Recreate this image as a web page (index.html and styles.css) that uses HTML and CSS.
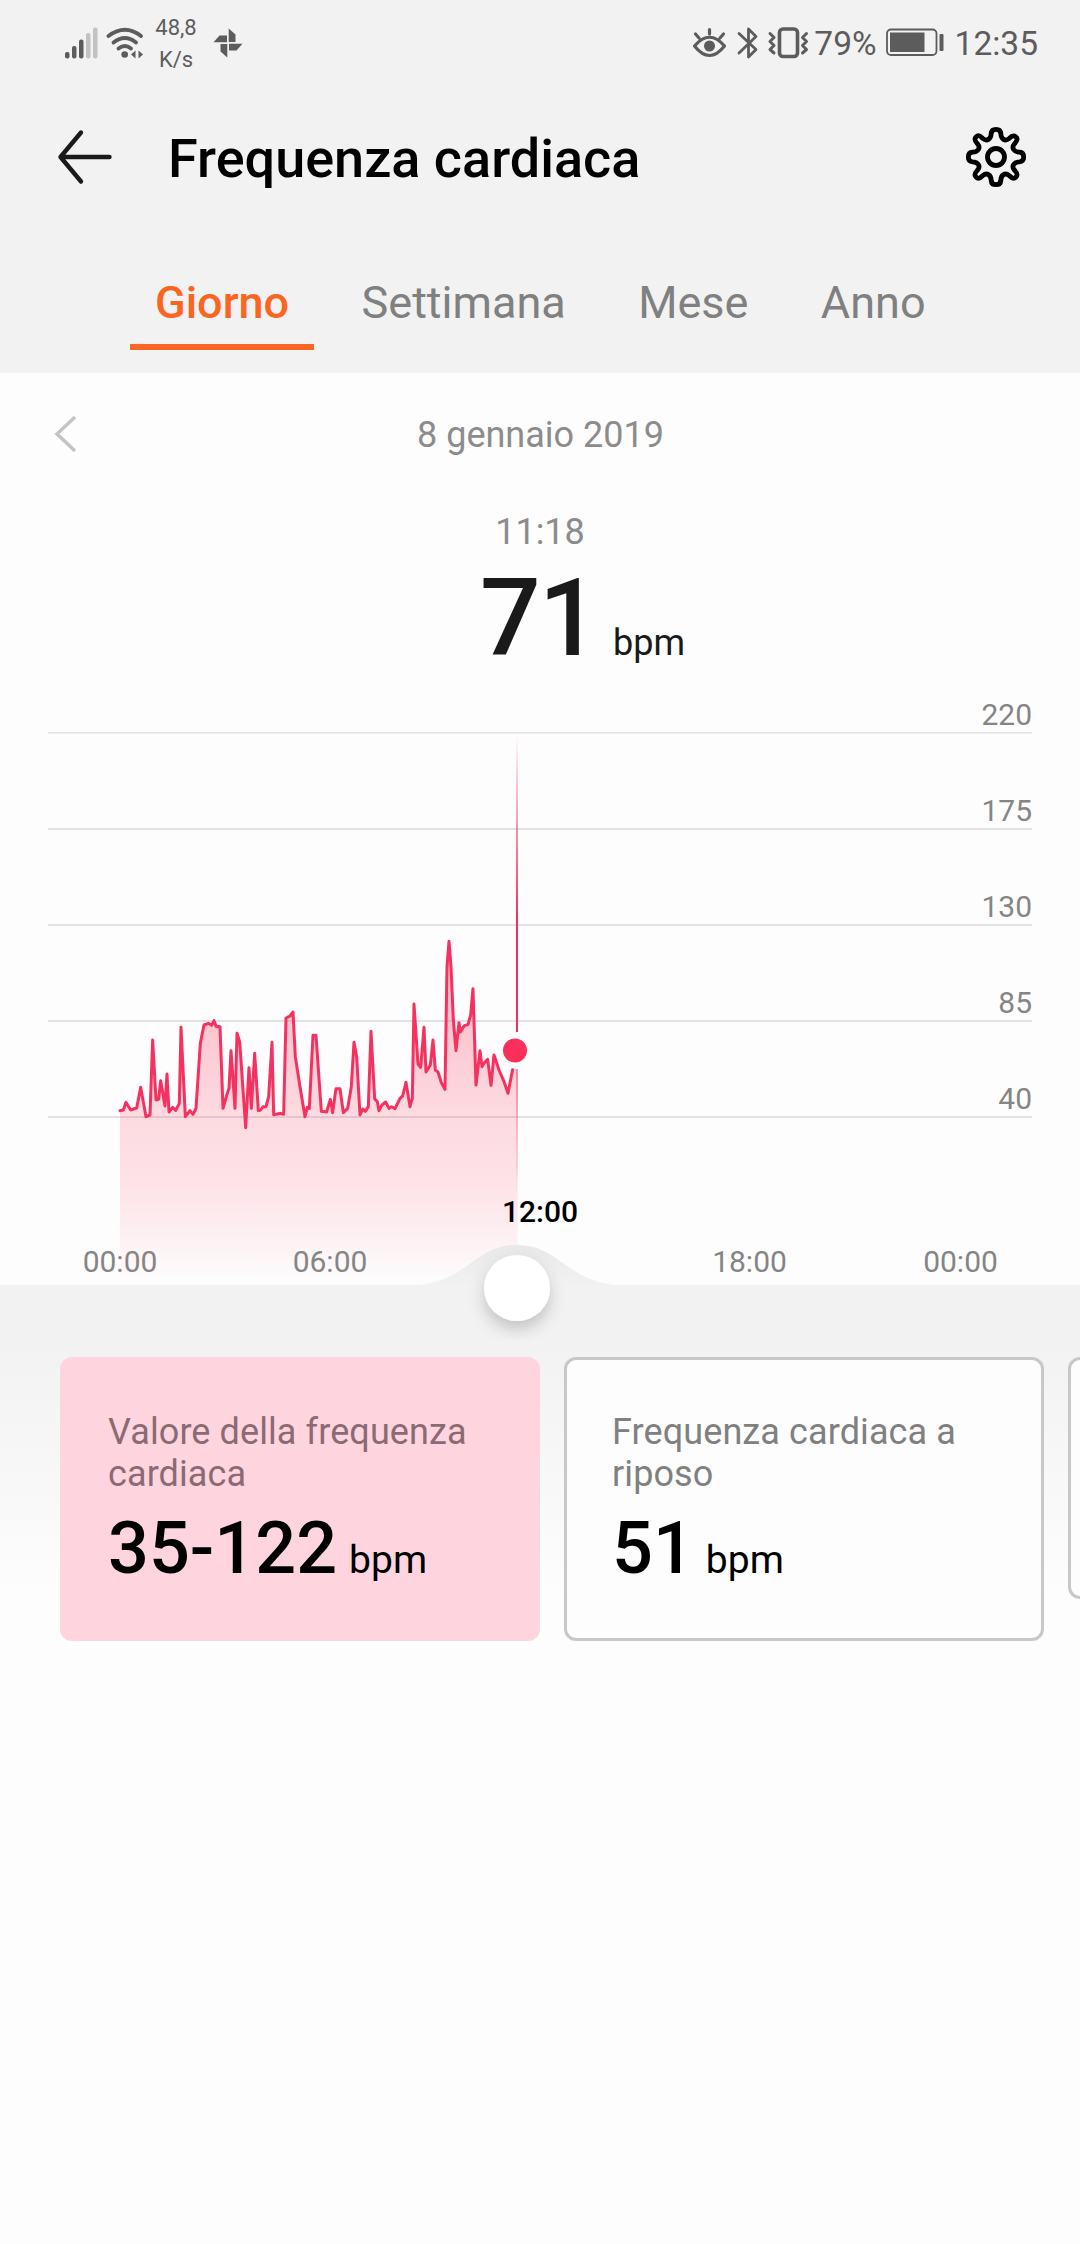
FILE: index.html
```html
<!DOCTYPE html>
<html lang="it">
<head>
    <meta charset="UTF-8">
    <meta name="viewport" content="width=device-width, initial-scale=1.0">
    <title>Frequenza cardiaca</title>
    <link rel="stylesheet" href="styles.css">
</head>
<body>
    <div class="top">
        <div class="status-bar">
            <svg width="94" height="40" viewBox="60 22 94 40">
                <g fill="#5c5c5c">
                    <rect x="65" y="51" width="4.5" height="6.5" rx="2"/>
                    <rect x="72" y="45" width="4.5" height="12.5" rx="2"/>
                    <rect x="79" y="38.5" width="4.5" height="19" rx="2"/>
                </g>
                <g fill="#c2c2c2">
                    <rect x="86" y="32" width="4.5" height="25.5" rx="2"/>
                    <rect x="93" y="26.5" width="4.5" height="31" rx="2"/>
                </g>
                <g fill="none" stroke="#5c5c5c" stroke-width="3.8" stroke-linecap="round">
                    <path d="M108.500 35Q125 22.500 141 35"/>
                    <path d="M113.500 41.500Q125 32.500 136 41.500"/>
                    <path d="M118.500 47.500Q125 42.500 131 47.500"/>
                </g>
                <circle cx="124.7" cy="53.5" r="3.3" fill="#5c5c5c"/>
                <path d="M131 53.500l4.500-4v8zM143 53.500l-4.500-4v8z" fill="#5c5c5c"/>
            </svg>
            <div class="speed"><span>48,8</span><span>K/s</span></div>
            <svg class="pinwheel" width="30" height="30" viewBox="-15 -15 30 30" fill="#5c5c5c">
                <path d="M.7-14.500V-1H7.500V-8.500ZM14.500 .7H1V7.500H8.500ZM-.7 14.500V1H-7.500V8.500ZM-14.500-.7H-1V-7.500H-8.500Z"/>
            </svg>
            <div class="spacer"></div>
            <svg width="120" height="36" viewBox="690 24 120 36" fill="none" stroke="#5c5c5c" stroke-width="3.2" stroke-linecap="round" stroke-linejoin="round">
                <path d="M694.500 45Q709.500 27.500 724.500 45Q709.500 64 694.500 45ZM709.500 28.500V33M695.500 33l3.500 4M723.500 33l-3.500 4"/>
                <circle cx="709.5" cy="45" r="5.5" fill="#5c5c5c" stroke="none"/>
                <path d="M739 32.500L756 48.500L748.500 56V28L756 35.500L739 52" stroke-width="2.800"/>
                <rect x="779.5" y="28" width="18" height="27.5" rx="3.5" stroke-width="3.6"/>
                <path d="M770 32.500l4 4-4 4 4 4-4 4 4 3.500M806.500 32.500l-4 4 4 4-4 4 4 4-4 3.500" stroke-width="3"/>
            </svg>
            <span class="status-text percent">79%</span>
            <svg class="battery" width="60" height="30" viewBox="885 28 60 30">
                <rect x="887" y="29.5" width="49.5" height="25.5" rx="4" fill="none" stroke="#5c5c5c" stroke-width="1.8"/>
                <rect x="890" y="32.5" width="34.5" height="19.5" fill="#5c5c5c"/>
                <rect x="939.5" y="34" width="4" height="17" rx="1" fill="#5c5c5c"/>
            </svg>
            <span class="status-text">12:35</span>
        </div>
        <header>
            <svg width="60" height="60" viewBox="0 0 60 60" fill="none" stroke="#1a1a1a" stroke-width="4.4" stroke-linecap="round" stroke-linejoin="round">
                <path d="M27 5.500L6.500 30L27 54.500M6.500 30H55.500"/>
            </svg>
            <h1>Frequenza cardiaca</h1>
            <svg width="64" height="64" viewBox="-32 -32 64 64" fill="none" stroke="#000" stroke-width="4.8" stroke-linejoin="round">
                <circle r="8.500"/>
                <path d="M-4.800-23.500C-4.600-26.500-3-27.700 0-27.700S4.600-26.500 4.800-23.500C5-18 9-15 13.200-18.500C17-22.500 18.500-21 20-20S22-17 18.500-13.200C15-9 18-5 23.500-4.800C26.500-4.600 27.700-3 27.700 0S26.500 4.600 23.500 4.800C18 5 15 9 18.500 13.200C22 17 21.500 18.500 20 20S17 22.500 13.200 18.500C9 15 5 18 4.800 23.500C4.600 26.500 3 27.700 0 27.700S-4.600 26.500-4.800 23.500C-5 18-9 15-13.200 18.500C-17 22.500-18.500 21.500-20 20S-22 17-18.500 13.200C-15 9-18 5-23.500 4.800C-26.500 4.600-27.700 3-27.700 0S-26.500-4.600-23.500-4.800C-18-5-15-9-18.500-13.200C-22-17-21.500-18.500-20-20S-17-22.500-13.200-18.500C-9-15-5-18-4.800-23.500Z"/>
            </svg>
        </header>
        <nav>
            <a class="tab active">Giorno</a>
            <a class="tab">Settimana</a>
            <a class="tab">Mese</a>
            <a class="tab">Anno</a>
        </nav>
    </div>

    <div class="date-row">
        <svg width="30" height="44" viewBox="0 0 30 44" fill="none" stroke="#c4c4c4" stroke-width="3.5">
            <path d="M23 5L5 22L23 39"/>
        </svg>
        <span class="date">8 gennaio 2019</span>
    </div>

    <div class="reading">
        <div class="time">11:18</div>
        <div class="value"><span class="number">71</span><span class="unit">bpm</span></div>
    </div>

    <svg width="1080" height="650" viewBox="0 690 1080 650">
        <defs>
            <linearGradient id="area" gradientUnits="userSpaceOnUse" x1="0" y1="120" x2="0" y2="1155">
                <stop offset="0" stop-color="#ff2d55" stop-opacity=".36"/>
                <stop offset=".5" stop-color="#ff2d55" stop-opacity=".17"/>
                <stop offset=".7" stop-color="#ff2d55" stop-opacity=".13"/>
                <stop offset="1" stop-color="#ff2d55" stop-opacity="0"/>
            </linearGradient>
            <linearGradient id="cursor" gradientUnits="userSpaceOnUse" x1="0" y1="735" x2="0" y2="920">
                <stop offset="0" stop-color="#ee2f62" stop-opacity="0"/>
                <stop offset="1" stop-color="#ee2f62"/>
            </linearGradient>
            <linearGradient id="cursorLow" gradientUnits="userSpaceOnUse" x1="0" y1="1069" x2="0" y2="1190">
                <stop offset="0" stop-color="#f0507a" stop-opacity=".6"/>
                <stop offset="1" stop-color="#f0507a" stop-opacity="0"/>
            </linearGradient>
            <linearGradient id="bump" gradientUnits="userSpaceOnUse" x1="0" y1="1244" x2="0" y2="1286">
                <stop offset="0" stop-color="#e8e8e8"/>
                <stop offset="1" stop-color="#f2f2f2"/>
            </linearGradient>
            <filter id="shadow" x="-50%" y="-50%" width="200%" height="200%">
                <feDropShadow dx="0" dy="8" stdDeviation="8" flood-color="#000" flood-opacity=".2"/>
            </filter>
        </defs>

        <g fill="#e2e2e2">
            <rect x="48" y="732" width="984" height="1.5"/>
            <rect x="48" y="828" width="984" height="2"/>
            <rect x="48" y="924" width="984" height="2"/>
            <rect x="48" y="1020" width="984" height="2"/>
            <rect x="48" y="1116" width="984" height="2"/>
        </g>
        <g class="axis-label" text-anchor="end">
            <text x="1032" y="725">220</text>
            <text x="1032" y="821">175</text>
            <text x="1032" y="917">130</text>
            <text x="1032" y="1013">85</text>
            <text x="1032" y="1109">40</text>
        </g>

        <!-- heart rate samples -->
        <g transform="translate(110 900) scale(.33333)">
            <path fill="url(#area)" d="M30 1155V632L40 630 48 607 62 630 80 624 92 562 108 650 120 645 128 420 138 600 146 598 152 542 165 618 171 522 177 636 188 622 197 631 208 610 213 382 226 650 240 632 249 643 258 625 271 430 282 375 295 370 305 376 312 362 318 379 330 380 339 625 349 590 357 565 363 452 375 625 381 400 389 425 407 683 417 503 424 625 434 460 445 632 452 630 459 620 468 620 476 590 486 427 491 644 512 640 521 643 528 354 540 348 549 336 556 470 570 560 585 650 592 622 598 625 609 406 618 406 634 634 650 636 661 598 668 638 678 566 690 566 700 638 713 625 724 560 732 427 740 470 750 645 758 627 766 634 775 620 783 394 794 596 802 605 807 632 816 615 827 606 837 625 845 620 855 626 870 595 878 588 888 547 900 620 907 595 912 312 924 492 932 502 942 382 948 516 961 495 969 420 976 510 984 516 994 548 1005 568 1011 200 1017 124 1023 200 1030 360 1038 452 1047 368 1051 396 1063 377 1074 374 1082 345 1089 266 1098 555 1110 452 1116 500 1122 490 1133 478 1143 556 1152 465 1167 510 1182 545 1194 580 1208 508H1223V1155Z"/>
            <path class="line" d="M30 632L40 630 48 607 62 630 80 624 92 562 108 650 120 645 128 420 138 600 146 598 152 542 165 618 171 522 177 636 188 622 197 631 208 610 213 382 226 650 240 632 249 643 258 625 271 430 282 375 295 370 305 376 312 362 318 379 330 380 339 625 349 590 357 565 363 452 375 625 381 400 389 425 407 683 417 503 424 625 434 460 445 632 452 630 459 620 468 620 476 590 486 427 491 644 512 640 521 643 528 354 540 348 549 336 556 470 570 560 585 650 592 622 598 625 609 406 618 406 634 634 650 636 661 598 668 638 678 566 690 566 700 638 713 625 724 560 732 427 740 470 750 645 758 627 766 634 775 620 783 394 794 596 802 605 807 632 816 615 827 606 837 625 845 620 855 626 870 595 878 588 888 547 900 620 907 595 912 312 924 492 932 502 942 382 948 516 961 495 969 420 976 510 984 516 994 548 1005 568 1011 200 1017 124 1023 200 1030 360 1038 452 1047 368 1051 396 1063 377 1074 374 1082 345 1089 266 1098 555 1110 452 1116 500 1122 490 1133 478 1143 556 1152 465 1167 510 1182 545 1194 580 1208 508"/>
        </g>

        <rect x="516" y="735" width="2" height="297" fill="url(#cursor)"/>
        <rect x="516" y="1069" width="2" height="121" fill="url(#cursorLow)"/>
        <circle cx="515" cy="1050.5" r="18" fill="#fdfdfd"/>
        <circle cx="515" cy="1050.5" r="12" fill="#fa2f5b"/>

        <!-- slider -->
        <rect x="0" y="1285" width="1080" height="55" fill="#f2f2f2"/>
        <path d="M404 1286C468 1286 472 1245 517 1245S566 1286 630 1286Z" fill="url(#bump)"/>
        <circle cx="517" cy="1288" r="33" fill="#fff" filter="url(#shadow)"/>

        <g class="axis-label" text-anchor="middle">
            <text x="120" y="1272">00:00</text>
            <text x="330" y="1272">06:00</text>
            <text x="749.5" y="1272">18:00</text>
            <text x="960.5" y="1272">00:00</text>
            <text class="current" x="540" y="1222">12:00</text>
        </g>
    </svg>

    <div class="cards">
        <div class="card selected">
            <p>Valore della frequenza cardiaca</p>
            <div class="card-value">35-122<span>bpm</span></div>
        </div>
        <div class="card">
            <p>Frequenza cardiaca a riposo</p>
            <div class="card-value">51<span>bpm</span></div>
        </div>
        <div class="card next"></div>
    </div>
</body>
</html>
```

FILE: styles.css
```css
* {
    box-sizing: border-box;
}
body {
    margin: 0;
    height: 2244px;
    overflow: hidden;
    background-color: #fdfdfd;
    font-family: Roboto, sans-serif;
    color: #000;
}
svg {
    display: block;
    flex: none;
}
.top {
    height: 373px;
    background-color: #f2f2f2;
}
.status-bar {
    display: flex;
    align-items: center;
    height: 86px;
    padding: 0 42px 0 60px;
    color: #5c5c5c;
}
.speed {
    display: flex;
    flex-direction: column;
    align-items: center;
    width: 46px;
    margin-left: -1px;
    padding-top: 1px;
    font-size: 22px;
    line-height: 32px;
}
.pinwheel {
    margin-left: 14px;
}
.spacer {
    flex: 1;
}
.status-text {
    font-size: 33.5px;
}
.percent {
    margin: 0 8px 0 4px;
}
.battery {
    margin-right: 10px;
}
header {
    display: flex;
    align-items: center;
    height: 142px;
    padding: 0 52px 0 54px;
}
h1 {
    flex: 1;
    margin: 3px 0 0 54px;
    font-size: 54px;
    font-weight: 500;
}
nav {
    display: flex;
    padding: 37px 0 0 130px;
    gap: 22.4px;
}
.tab {
    height: 85px;
    padding: 11px 25px 0;
    font-size: 45px;
    line-height: 53px;
    color: #808080;
}
.tab.active {
    color: #fb6522;
    font-weight: 500;
    border-bottom: 6px solid #fb6522;
}
.date-row {
    display: flex;
    align-items: center;
    height: 121px;
    padding: 0 50px 0 52px;
}
.date {
    flex: 1;
    margin: 2px 31px 0 0;
    text-align: center;
    font-size: 36px;
    color: #8c8c8c;
}
.reading {
    height: 196px;
    padding-top: 17px;
}
.time {
    text-align: center;
    font-size: 36px;
    line-height: 42px;
    color: #8c8c8c;
}
.value {
    display: flex;
    align-items: baseline;
    padding: 3px 0 0 480px;
    line-height: 126px;
    color: #1a1a1a;
}
.number {
    width: 133px;
    font-size: 107px;
    font-weight: 500;
    letter-spacing: -2px;
}
.unit {
    font-size: 36px;
}
.axis-label {
    font-size: 30px;
    fill: #858585;
}
.current {
    font-weight: 500;
    fill: #000;
}
.line {
    fill: none;
    stroke: #f5315f;
    stroke-width: 9;
    stroke-linejoin: round;
    stroke-linecap: round;
}
.cards {
    display: flex;
    align-items: flex-start;
    gap: 24px;
    height: 301px;
    padding: 17px 0 0 60px;
    overflow: hidden;
    background: linear-gradient(#f2f2f2, #fdfdfd 260px);
}
.card {
    flex: none;
    width: 480px;
    height: 284px;
    padding: 51px 40px 0 45px;
    border: 3px solid #c8c8c8;
    border-radius: 12px;
    background-color: #fdfdfd;
}
.card.selected {
    background-color: #fed5df;
    border-color: #fed5df;
}
.card.next {
    height: 242px;
}
.card p {
    margin: 0;
    font-size: 36px;
    line-height: 42px;
    letter-spacing: 0.1px;
    color: #808080;
}
.card.selected p {
    color: #8b6a73;
}
.card-value {
    margin-top: 12px;
    font-size: 72px;
    line-height: 84px;
    font-weight: 500;
}
.card-value span {
    margin-left: 12px;
    font-size: 39px;
    font-weight: 400;
}
```
